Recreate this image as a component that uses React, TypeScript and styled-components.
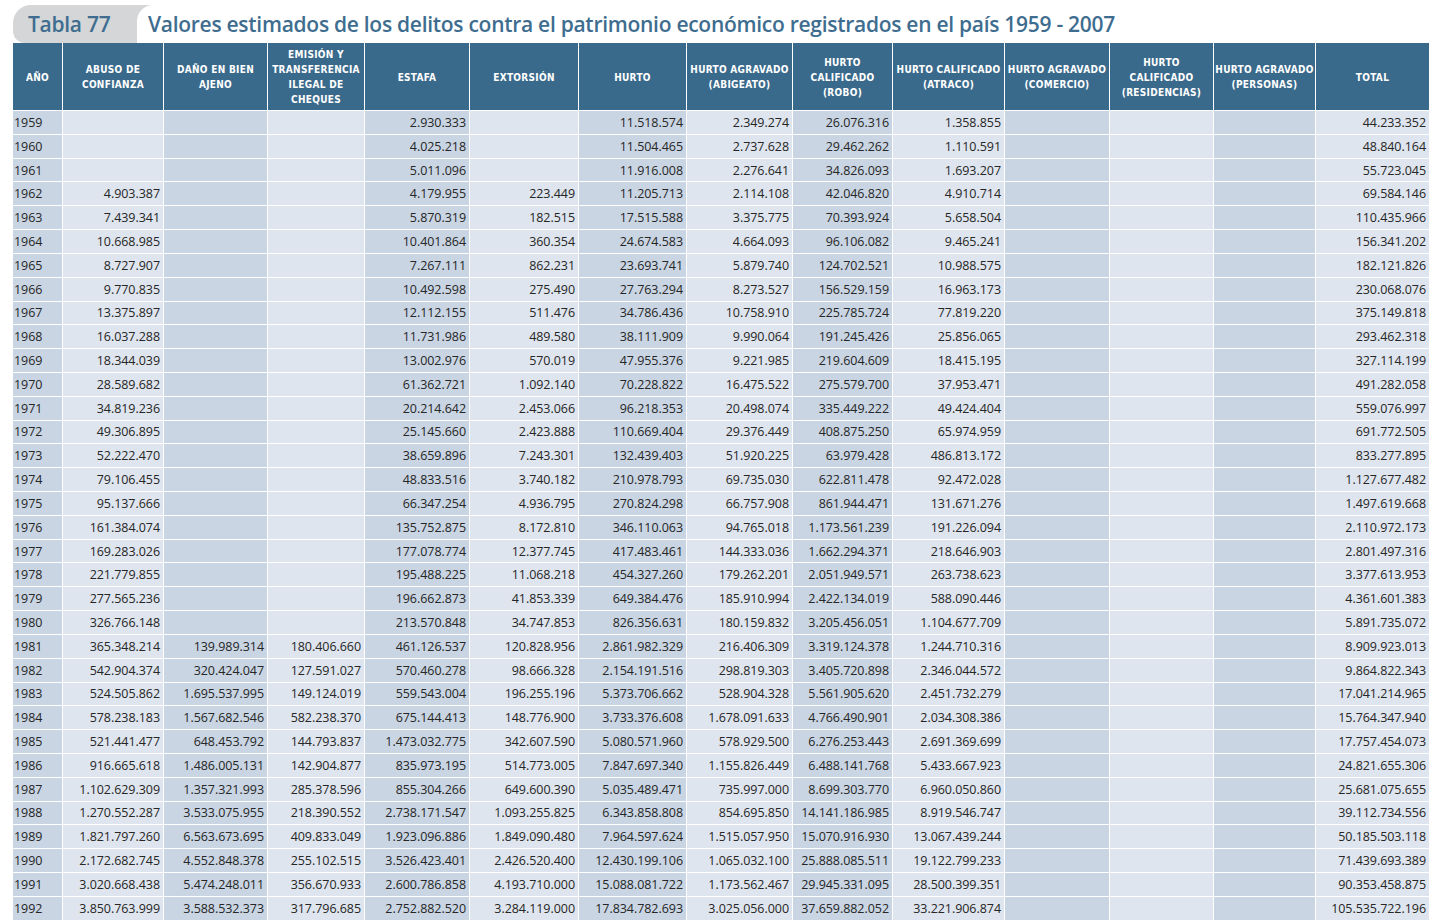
import styled, { createGlobalStyle } from 'styled-components'

const GlobalStyle = createGlobalStyle`
  html, body {
    margin: 0;
    padding: 0;
    background: #ffffff;
  }
  body {
    font-family: "Open Sans", "Noto Sans", sans-serif;
  }
`

const Page = styled.div`
  padding: 5px 0 0 13px;
  width: 1419px;
`

const TitleBar = styled.div`
  display: flex;
  height: 38px;
  color: #3e6d8f;
  font: 600 21px "Open Sans", "Noto Sans", sans-serif;
  letter-spacing: -0.28px;
`

const Tab = styled.div`
  display: flex;
  align-items: center;
  width: 125px;
  padding-left: 15px;
  background: #d4d6d8;
  border-radius: 18px 0 0 12px;
`

const Heading = styled.h1`
  flex: 1;
  display: flex;
  align-items: center;
  margin: 0 0 0 -16px;
  padding-left: 11px;
  background: #ffffff;
  border-top-left-radius: 16px;
  font: inherit;
  white-space: nowrap;
`

const Grid = styled.div`
  display: grid;
  grid-template-columns: 49px 100px 103px 96px 104px 108px 107px 105px 99px 111px 104px 103px 101px 113px;
  grid-template-rows: 67px;
  grid-auto-rows: 22.82px;
  gap: 1px;
  background: #ffffff;
`

const HeadCell = styled.div`
  display: flex;
  align-items: center;
  justify-content: center;
  padding: 1px 1px 0;
  background: #3a6a8b;
  color: #ffffff;
  font-family: "DejaVu Sans Condensed", "DejaVu Sans", sans-serif;
  font-size: 10px;
  font-weight: 700;
  letter-spacing: 0.3px;
  line-height: 15px;
  text-align: center;
  white-space: nowrap;
`

const Cell = styled.div<{ $dark: boolean; $year?: boolean }>`
  display: flex;
  align-items: center;
  justify-content: ${(p) => (p.$year ? 'flex-start' : 'flex-end')};
  padding: ${(p) => (p.$year ? '0 0 0 1px' : '0 3px 0 0')};
  background: ${(p) => (p.$dark ? '#c9d5e3' : '#dfe5ee')};
  color: #262626;
  font-size: 12.5px;
  letter-spacing: -0.05px;
  white-space: nowrap;
`

const headers = [
  ['AÑO'],
  ['ABUSO DE', 'CONFIANZA'],
  ['DAÑO EN BIEN', 'AJENO'],
  ['EMISIÓN Y', 'TRANSFERENCIA', 'ILEGAL DE', 'CHEQUES'],
  ['ESTAFA'],
  ['EXTORSIÓN'],
  ['HURTO'],
  ['HURTO AGRAVADO', '(ABIGEATO)'],
  ['HURTO', 'CALIFICADO', '(ROBO)'],
  ['HURTO CALIFICADO', '(ATRACO)'],
  ['HURTO AGRAVADO', '(COMERCIO)'],
  ['HURTO', 'CALIFICADO', '(RESIDENCIAS)'],
  ['HURTO AGRAVADO', '(PERSONAS)'],
  ['TOTAL'],
]

// año | abuso | daño | emisión | estafa | extorsión | hurto | abigeato | robo | atraco | comercio | residencias | personas | total
const rows = [
  '1959||||2.930.333||11.518.574|2.349.274|26.076.316|1.358.855||||44.233.352',
  '1960||||4.025.218||11.504.465|2.737.628|29.462.262|1.110.591||||48.840.164',
  '1961||||5.011.096||11.916.008|2.276.641|34.826.093|1.693.207||||55.723.045',
  '1962|4.903.387|||4.179.955|223.449|11.205.713|2.114.108|42.046.820|4.910.714||||69.584.146',
  '1963|7.439.341|||5.870.319|182.515|17.515.588|3.375.775|70.393.924|5.658.504||||110.435.966',
  '1964|10.668.985|||10.401.864|360.354|24.674.583|4.664.093|96.106.082|9.465.241||||156.341.202',
  '1965|8.727.907|||7.267.111|862.231|23.693.741|5.879.740|124.702.521|10.988.575||||182.121.826',
  '1966|9.770.835|||10.492.598|275.490|27.763.294|8.273.527|156.529.159|16.963.173||||230.068.076',
  '1967|13.375.897|||12.112.155|511.476|34.786.436|10.758.910|225.785.724|77.819.220||||375.149.818',
  '1968|16.037.288|||11.731.986|489.580|38.111.909|9.990.064|191.245.426|25.856.065||||293.462.318',
  '1969|18.344.039|||13.002.976|570.019|47.955.376|9.221.985|219.604.609|18.415.195||||327.114.199',
  '1970|28.589.682|||61.362.721|1.092.140|70.228.822|16.475.522|275.579.700|37.953.471||||491.282.058',
  '1971|34.819.236|||20.214.642|2.453.066|96.218.353|20.498.074|335.449.222|49.424.404||||559.076.997',
  '1972|49.306.895|||25.145.660|2.423.888|110.669.404|29.376.449|408.875.250|65.974.959||||691.772.505',
  '1973|52.222.470|||38.659.896|7.243.301|132.439.403|51.920.225|63.979.428|486.813.172||||833.277.895',
  '1974|79.106.455|||48.833.516|3.740.182|210.978.793|69.735.030|622.811.478|92.472.028||||1.127.677.482',
  '1975|95.137.666|||66.347.254|4.936.795|270.824.298|66.757.908|861.944.471|131.671.276||||1.497.619.668',
  '1976|161.384.074|||135.752.875|8.172.810|346.110.063|94.765.018|1.173.561.239|191.226.094||||2.110.972.173',
  '1977|169.283.026|||177.078.774|12.377.745|417.483.461|144.333.036|1.662.294.371|218.646.903||||2.801.497.316',
  '1978|221.779.855|||195.488.225|11.068.218|454.327.260|179.262.201|2.051.949.571|263.738.623||||3.377.613.953',
  '1979|277.565.236|||196.662.873|41.853.339|649.384.476|185.910.994|2.422.134.019|588.090.446||||4.361.601.383',
  '1980|326.766.148|||213.570.848|34.747.853|826.356.631|180.159.832|3.205.456.051|1.104.677.709||||5.891.735.072',
  '1981|365.348.214|139.989.314|180.406.660|461.126.537|120.828.956|2.861.982.329|216.406.309|3.319.124.378|1.244.710.316||||8.909.923.013',
  '1982|542.904.374|320.424.047|127.591.027|570.460.278|98.666.328|2.154.191.516|298.819.303|3.405.720.898|2.346.044.572||||9.864.822.343',
  '1983|524.505.862|1.695.537.995|149.124.019|559.543.004|196.255.196|5.373.706.662|528.904.328|5.561.905.620|2.451.732.279||||17.041.214.965',
  '1984|578.238.183|1.567.682.546|582.238.370|675.144.413|148.776.900|3.733.376.608|1.678.091.633|4.766.490.901|2.034.308.386||||15.764.347.940',
  '1985|521.441.477|648.453.792|144.793.837|1.473.032.775|342.607.590|5.080.571.960|578.929.500|6.276.253.443|2.691.369.699||||17.757.454.073',
  '1986|916.665.618|1.486.005.131|142.904.877|835.973.195|514.773.005|7.847.697.340|1.155.826.449|6.488.141.768|5.433.667.923||||24.821.655.306',
  '1987|1.102.629.309|1.357.321.993|285.378.596|855.304.266|649.600.390|5.035.489.471|735.997.000|8.699.303.770|6.960.050.860||||25.681.075.655',
  '1988|1.270.552.287|3.533.075.955|218.390.552|2.738.171.547|1.093.255.825|6.343.858.808|854.695.850|14.141.186.985|8.919.546.747||||39.112.734.556',
  '1989|1.821.797.260|6.563.673.695|409.833.049|1.923.096.886|1.849.090.480|7.964.597.624|1.515.057.950|15.070.916.930|13.067.439.244||||50.185.503.118',
  '1990|2.172.682.745|4.552.848.378|255.102.515|3.526.423.401|2.426.520.400|12.430.199.106|1.065.032.100|25.888.085.511|19.122.799.233||||71.439.693.389',
  '1991|3.020.668.438|5.474.248.011|356.670.933|2.600.786.858|4.193.710.000|15.088.081.722|1.173.562.467|29.945.331.095|28.500.399.351||||90.353.458.875',
  '1992|3.850.763.999|3.588.532.373|317.796.685|2.752.882.520|3.284.119.000|17.834.782.693|3.025.056.000|37.659.882.052|33.221.906.874||||105.535.722.196',
].map((r) => r.split('|'))

export default function App() {
  return (
    <>
      <GlobalStyle />
      <Page>
        <TitleBar>
          <Tab>Tabla 77</Tab>
          <Heading>
            Valores estimados de los delitos contra el patrimonio económico registrados en el país 1959 - 2007
          </Heading>
        </TitleBar>
        <Grid>
          {headers.map((lines, i) => (
            <HeadCell key={i}>
              <span>
                {lines.map((l, j) => (
                  <span key={j}>
                    {j > 0 && <br />}
                    {l}
                  </span>
                ))}
              </span>
            </HeadCell>
          ))}
          {rows.map((row) =>
            row.map((value, c) => (
              <Cell key={row[0] + '-' + c} $dark={c % 2 === 0} $year={c === 0}>
                {value}
              </Cell>
            ))
          )}
        </Grid>
      </Page>
    </>
  )
}
